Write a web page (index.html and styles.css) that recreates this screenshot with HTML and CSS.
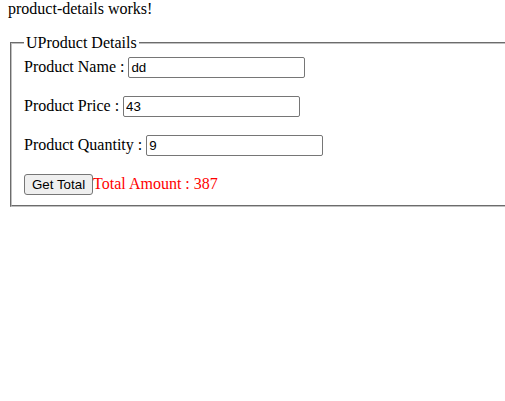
FILE: index.html
```html
<!DOCTYPE html>
<html>
<head>
<meta charset="utf-8">
<link rel="stylesheet" href="styles.css">
</head>
<body>
<p class="intro">product-details works!</p>
<div class="wrap">
<fieldset class="box">
  <legend class="box-title">UProduct Details</legend>
  <div class="rows">
    <div class="row"><label>Product Name : </label><input class="field field-name" type="text" value="dd"></div>
    <div class="row"><label>Product Price : </label><input class="field" type="text" value="43"></div>
    <div class="row"><label>Product Quantity : </label><input class="field" type="text" value="9"></div>
    <div class="row"><button class="btn">Get Total</button><span class="total">Total Amount : 387</span></div>
  </div>
</fieldset>
</div>
</body>
</html>
```

FILE: styles.css
```css
html {
  background: #fff;
}
body {
  margin: 0;
  padding: 0 0 0 8px;
  font-family: "Liberation Serif", "Times New Roman", serif;
  font-size: 16px;
  color: #000;
  overflow: hidden;
}
.intro {
  margin: 0 0 16px;
}
.wrap {
  overflow: hidden;
  margin-right: 0;
}
.box {
  margin: 0 -40px 0 2px;
  padding: 4px 12px 10px;
  border: 2px groove rgb(192, 192, 192);
}
.box-title {
  padding: 0 2px;
}
.rows {
  display: flex;
  flex-direction: column;
  gap: 17px;
}
.row {
  line-height: 22px;
}
.field {
  box-sizing: border-box;
  width: 177px;
  height: 21px;
  padding: 1px 2px;
  border: 1px solid #767676;
  border-radius: 2px;
  font-family: "Liberation Sans", Arial, sans-serif;
  font-size: 13.333px;
  color: #000;
  vertical-align: baseline;
}
.btn {
  font-family: "Liberation Sans", Arial, sans-serif;
  font-size: 13.333px;
  padding: 2px 7px;
  border: 1px solid #767676;
  border-radius: 3px;
  background: #efefef;
  color: #000;
}
.total {
  color: #ff0000;
}
```
